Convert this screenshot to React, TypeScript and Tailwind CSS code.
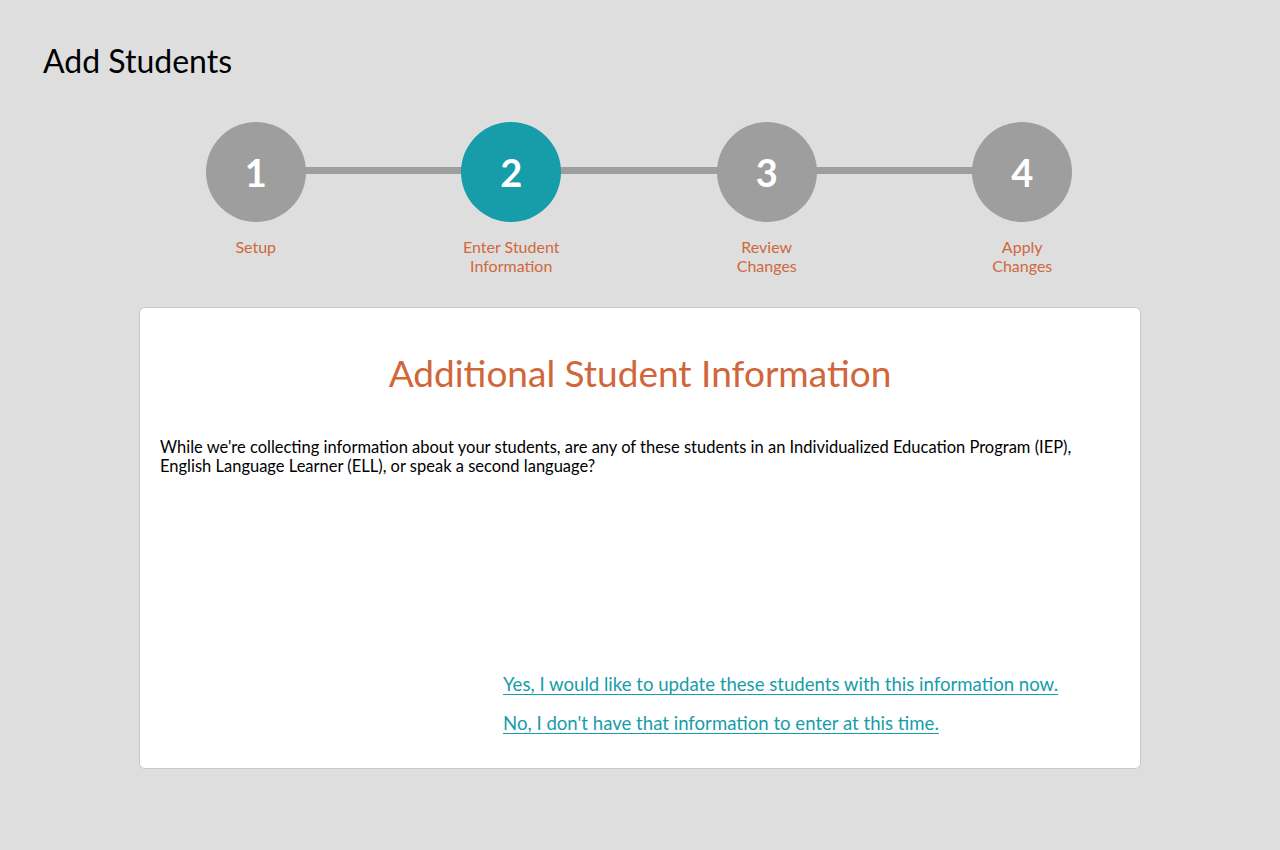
const STEPS = [
  { n: 1, label: ["Setup"] },
  { n: 2, label: ["Enter Student", "Information"], active: true },
  { n: 3, label: ["Review", "Changes"] },
  { n: 4, label: ["Apply", "Changes"] },
];

export default function App() {
  return (
    <div className="min-h-[850px] bg-[#dedede] font-['Lato',sans-serif] text-black">
      <h1 className="pl-[43px] pt-[41px] text-[32px] leading-[40px]">Add Students</h1>

      <div className="relative ml-[128px] mt-[41px] grid w-[1022px] grid-cols-4">
        <div className="absolute left-[127px] right-[127px] top-[45px] h-[7px] bg-[#9e9e9e]" />
        {STEPS.map((s) => (
          <div key={s.n} className="relative flex flex-col items-center">
            <div
              className={[
                "flex h-[100px] w-[100px] items-center justify-center rounded-full text-[38px] font-bold text-white",
                s.active ? "bg-[#179ca9]" : "bg-[#9e9e9e]",
              ].join(" ")}
            >
              {s.n}
            </div>
            <div className="mt-[15px] text-center text-[16px] leading-[19px] text-[#d0683c]">
              {s.label.map((l) => (
                <div key={l}>{l}</div>
              ))}
            </div>
          </div>
        ))}
      </div>

      <div className="ml-[139px] mt-[32px] h-[462px] w-[1002px] rounded-[6px] border border-[#c8c8c8] bg-white px-[20px]">
        <h2 className="mt-[42px] text-center text-[37px] leading-[46px] text-[#d0663a]">
          Additional Student Information
        </h2>
        <p className="mt-[42px] text-[16.5px] leading-[19px]">
          While we're collecting information about your students, are any of these students in an
          Individualized Education Program (IEP), English Language Learner (ELL), or speak a second
          language?
        </p>
        <div className="ml-[343px] mt-[197px] flex flex-col gap-[17px] text-[18.6px] leading-[22px] text-[#179ca9]">
          <a href="#" className="underline underline-offset-[3px]">
            Yes, I would like to update these students with this information now.
          </a>
          <a href="#" className="underline underline-offset-[3px]">
            No, I don't have that information to enter at this time.
          </a>
        </div>
      </div>
    </div>
  );
}
